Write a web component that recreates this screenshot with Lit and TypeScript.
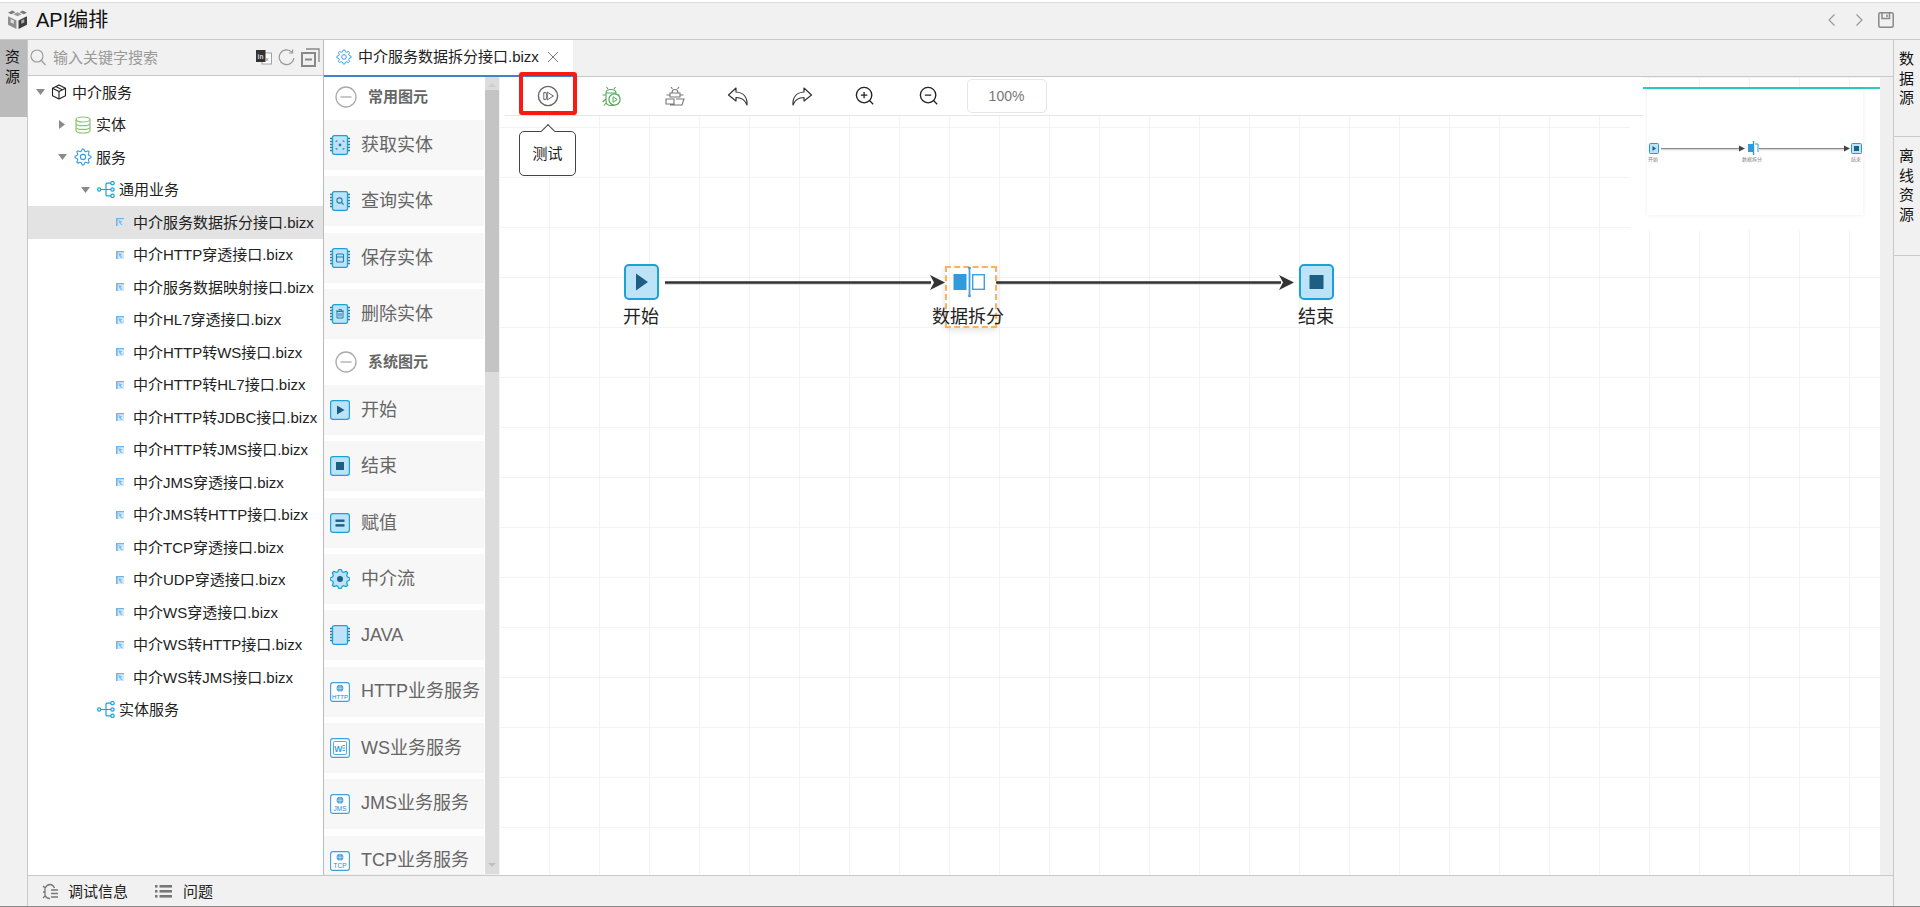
import { LitElement, html, svg, css } from "lit";
import { customElement } from "lit/decorators.js";

function gearPath(cx: number, cy: number, ro: number, ri: number, teeth: number): string {
  const pts: string[] = [];
  const n = teeth * 4;
  for (let i = 0; i < n; i++) {
    const a = (i / n) * Math.PI * 2 - Math.PI / 2 - Math.PI / n;
    const r = i % 4 < 2 ? ro : ri;
    pts.push(`${(cx + r * Math.cos(a)).toFixed(2)} ${(cy + r * Math.sin(a)).toFixed(2)}`);
  }
  return "M" + pts.join("L") + "Z";
}

const gearOutline = (size = 18, color = "#2f9bea") => html`<svg width=${size} height=${size} viewBox="0 0 18 18" fill="none" stroke=${color} stroke-width="1.1" stroke-linejoin="round"><path d=${gearPath(9, 9, 8, 6, 8)}></path><circle cx="9" cy="9" r="2.6"></circle></svg>`;

const cubeIcon = html`<svg width="16" height="16" viewBox="0 0 16 16" fill="none" stroke="#222" stroke-width="1.1" stroke-linejoin="round"><path d="M8 1 14.5 4.2V11.8L8 15 1.5 11.8V4.2Z"></path><path d="M1.5 4.2 8 7.4 14.5 4.2M8 7.4V15M4.8 2.6 11.2 5.8"></path></svg>`;
const dbIcon = html`<svg width="16" height="18" viewBox="0 0 16 18" fill="none" stroke="#8cc474" stroke-width="1.2"><ellipse cx="8" cy="3.5" rx="7" ry="2.5"></ellipse><path d="M1 3.5V14.5C1 16 4 17 8 17S15 16 15 14.5V3.5M1 7.2C1 8.7 4 9.7 8 9.7S15 8.7 15 7.2M1 10.9C1 12.4 4 13.4 8 13.4S15 12.4 15 10.9"></path></svg>`;
const flowIcon = html`<svg width="18" height="17" viewBox="0 0 18 17" fill="none" stroke="#1ba1d8" stroke-width="1.2"><circle cx="2.2" cy="8.5" r="1.6"></circle><circle cx="15.5" cy="2.2" r="1.7"></circle><circle cx="15.5" cy="8.5" r="1.7"></circle><circle cx="15.5" cy="14.8" r="1.7"></circle><path d="M3.8 8.5H13.8M9 8.5V3.2Q9 2.2 10 2.2H13.8M9 8.5V13.8Q9 14.8 10 14.8H13.8"></path></svg>`;
const fileIcon = html`<svg width="8" height="8" viewBox="0 0 8 8"><rect width="8" height="8" fill="#d3e8f7"></rect><path d="M0 0H1.6V8H0ZM0 0H8V1.2H0Z" fill="#6fb4e4"></path><path d="M2.4 2 6.5 3.4 4.6 4.4 6.6 7H5L3 4.6Z" fill="#7dbbe8"></path></svg>`;

const chip = (inner: unknown) => html`<svg width="20" height="20" viewBox="0 0 20 20">
  <path d="M0 3.5H3M0 6.5H3M0 9.5H3M0 12.5H3M0 15.5H3M17 3.5H20M17 6.5H20M17 9.5H20M17 12.5H20M17 15.5H20" stroke="#2b7da3" stroke-width="1.3"></path>
  <rect x="2.5" y="0.7" width="15" height="18.6" rx="1.6" fill="#bde3f9" stroke="#1ba1d8" stroke-width="1.3"></rect>${inner}</svg>`;
const boxIcon = (inner: unknown) => html`<svg width="20" height="20" viewBox="0 0 20 20"><rect x="0.6" y="0.6" width="18.8" height="18.8" rx="2.4" fill="#bde3f9" stroke="#1ba1d8" stroke-width="1.2"></rect>${inner}</svg>`;
const svcIcon = (label: string, fs: number) => html`<svg width="20" height="20" viewBox="0 0 20 20"><rect x="0.6" y="0.6" width="18.8" height="18.8" rx="2.4" fill="#fff" stroke="#3d9fe0" stroke-width="1.1"></rect><circle cx="10" cy="6.2" r="3.4" fill="#4aa3df"></circle><path d="M6.6 6.2H13.4M10 2.8V9.6" stroke="#fff" stroke-width="0.5"></path><text x="10" y="16.8" text-anchor="middle" font-family="Liberation Sans" font-size=${fs} fill="#2f86c9">${label}</text></svg>`;

const paletteIcons: Record<string, unknown> = {
  get: chip(svg`<g fill="none" stroke="#2b7da3" stroke-width="1"><path d="M6 7V6H7.5M12.5 6H14V7M6 13V14H7.5M12.5 14H14V13"></path></g><circle cx="10" cy="10" r="1.4" fill="#2b7da3"></circle>`),
  query: chip(svg`<circle cx="9.5" cy="9.5" r="2.6" fill="none" stroke="#2b7da3" stroke-width="1.1"></circle><path d="M11.5 11.5 13.6 13.6" stroke="#2b7da3" stroke-width="1.2"></path>`),
  save: chip(svg`<rect x="6.5" y="6" width="7" height="8" rx="1" fill="none" stroke="#2b7da3" stroke-width="1.1"></rect><path d="M6.5 9H13.5" stroke="#2b7da3" stroke-width="1"></path>`),
  del: chip(svg`<path d="M7 7.5H13V14H7ZM6 7H14M8.6 5.5H11.4V7M9 9V12.5M11 9V12.5" fill="none" stroke="#2b7da3" stroke-width="1"></path>`),
  start: boxIcon(svg`<path d="M7 5.5 14.5 10 7 14.5Z" fill="#1c5f82"></path>`),
  end: boxIcon(svg`<rect x="6" y="6" width="8" height="8" fill="#1c5f82"></rect>`),
  assign: boxIcon(svg`<rect x="5.5" y="6.5" width="9" height="2.4" fill="#1c5f82"></rect><rect x="5.5" y="11.2" width="9" height="2.4" fill="#1c5f82"></rect>`),
  flow: html`<svg width="20" height="20" viewBox="0 0 20 20"><path d=${gearPath(10, 10, 9.8, 7.6, 8)} fill="#bde3f9" stroke="#1ba1d8" stroke-width="1.3" stroke-linejoin="round"></path><circle cx="10" cy="10" r="3" fill="#1c5f82"></circle></svg>`,
  java: chip(""),
  http: svcIcon("HTTP", 6.2),
  ws: html`<svg width="20" height="20" viewBox="0 0 20 20"><rect x="0.6" y="0.6" width="18.8" height="18.8" rx="2.4" fill="#fff" stroke="#3d9fe0" stroke-width="1.1"></rect><rect x="3.5" y="3.5" width="13" height="13" rx="1" fill="none" stroke="#3d9fe0" stroke-width="0.9"></rect><text x="8.3" y="13.5" text-anchor="middle" font-family="Liberation Sans" font-size="8.5" font-weight="700" fill="#3d9fe0">W</text><path d="M12.5 7.5H15M12.5 10H15M12.5 12.5H15" stroke="#3d9fe0" stroke-width="1"></path></svg>`,
  jms: svcIcon("JMS", 6.5),
  tcp: svcIcon("TCP", 6.5),
};

const tbSvg = (w: number, c: unknown) => html`<svg width=${w} height=${w} viewBox="0 0 22 22" fill="none">${c}</svg>`;
const bugBody = (color: string) => svg`<g stroke=${color} stroke-width="1.1"><path d="M6 8Q6 4.5 11 4.5T16 8V16Q16 20.5 11 20.5T6 16Z"></path><path d="M6 8H16M8 4 6.5 2M14 4 15.5 2M6 10H2.5M16 10H19.5M6 14 2.5 17M6 18 4 20.5"></path></g>`;

@customElement("app-root")
export class AppRoot extends LitElement {
  static styles = css`
    :host { display: block; width: 1920px; height: 907px; overflow: hidden; font-family: "Liberation Sans", "Noto Sans CJK SC", sans-serif; font-size: 15px; color: #222; background: #f1f1f1; }
    * { box-sizing: border-box; }
    svg { display: block; flex: none; }
    .page { display: flex; flex-direction: column; height: 907px; border-bottom: 1px solid #888; }
    .top { height: 40px; flex: none; display: flex; align-items: center; padding: 0 26px 0 7px; border-bottom: 1px solid #c9c9c9; background: linear-gradient(#fff 0 2px, #ddd 2px 3px, #f1f1f1 3px); }
    .title { font-size: 20px; margin: 0 0 2px 8px; color: #111; flex: 1; }
    .topnav { display: flex; align-items: center; gap: 11px; }
    .body { flex: 1; display: flex; min-height: 0; }
    .rail { width: 28px; flex: none; border-right: 1px solid #c9c9c9; background: #f1f1f1; }
    .rail-tab { width: 27px; height: 77px; background: #bbb; padding: 7px 5px; line-height: 20px; color: #111; }
    .work { flex: 1; display: flex; flex-direction: column; min-width: 0; }
    .main { flex: 1; display: flex; min-height: 0; }
    .res { width: 296px; flex: none; background: #fff; border-right: 1px solid #bbb; display: flex; flex-direction: column; }
    .search { height: 36px; flex: none; background: #f1f1f1; border-bottom: 1px solid #c9c9c9; display: flex; align-items: center; padding: 0 3px 0 2px; }
    .ph { color: #999; flex: 1; margin: 0 0 2px 7px; }
    .search-tools { display: flex; align-items: center; gap: 6px; }
    .tree { flex: 1; }
    .row { height: 32.5px; display: flex; align-items: center; color: #222; white-space: nowrap; }
    .row.sel { background: #e3e3e3; }
    .rtext { margin-bottom: 2px; }
    .arrow { width: 12px; flex: none; display: flex; justify-content: center; }
    .ticon { width: 18px; margin: 0 4px 0 6px; flex: none; display: flex; justify-content: center; }
    .row.root .ticon { margin-left: 4px; }
    .center { flex: 1; display: flex; flex-direction: column; min-width: 0; }
    .tabs { height: 37px; flex: none; display: flex; background: #f1f1f1; border-bottom: 1px solid #c9c9c9; }
    .tab { width: 249px; height: 37px; background: #fff; border-bottom: 2px solid #3f83c8; display: flex; align-items: center; padding: 0 0 2px 12px; color: #222; }
    .tab-text { margin: 0 8px 2px 6px; }
    .content { flex: 1; display: flex; min-height: 0; }
    .palette { width: 161px; flex: none; background: #fff; height: 797px; overflow: hidden; }
    .group { display: flex; flex-direction: column; gap: 6.33px; }
    .ghead { height: 43px; margin-bottom: -6.33px; padding: 0 0 4px 11px; display: flex; align-items: center; font-weight: 700; color: #666; gap: 11px; }
    .ghead.sys { height: 46px; padding-bottom: 0; }
    .gtext { margin-bottom: 3px; }
    .item { height: 50px; flex: none; width: 160px; background: #f7f7f7; display: flex; align-items: center; padding-left: 6px; gap: 11px; font-size: 18px; color: #666; white-space: nowrap; overflow: hidden; }
    .itext { margin-bottom: 4px; }
    .itext.mix { margin-bottom: 6px; }
    .scroll { width: 14px; flex: none; height: 797px; background: #dcdcdc; position: relative; display: flex; flex-direction: column; align-items: center; }
    .thumb { margin-top: 13px; width: 100%; height: 282px; background: #c4c4c4; }
    .sb-up { position: absolute; top: 6px; left: 3px; width: 0; height: 0; border: 4px solid transparent; border-top: 0; border-bottom: 4px solid #ccc; }
    .sb-down { position: absolute; bottom: 7px; left: 3px; width: 0; height: 0; border: 4px solid transparent; border-bottom: 0; border-top: 4px solid #c0c0c0; }
    .gutter { width: 1px; flex: none; background: #f3f3f3; }
    .canvas { width: 1380px; flex: none; position: relative; background-color: #fff; background-image: linear-gradient(#f3f3f5 1px, transparent 1px), linear-gradient(90deg, #f3f3f5 1px, transparent 1px); background-size: 50px 50px; background-position: 0 0, -1px 0; }
    .strip { width: 13px; flex: none; background: #efefef; }
    .toolbar { height: 39px; margin: 0 237px 0 5px; padding-left: 11px; background: #fff; border-bottom: 1px solid #e6e6ea; display: flex; align-items: center; position: relative; }
    .tool { width: 63.5px; flex: none; display: flex; justify-content: center; }
    .toolbar-lead { position: absolute; left: -5px; top: 0; width: 5px; height: 38px; background: #fff; }
    .zoom { width: 80px; height: 34px; margin-left: 6px; border: 1px solid #e4e6ea; border-radius: 5px; display: flex; align-items: center; justify-content: center; color: #777; font-size: 14px; }
    .red { position: absolute; left: 14px; top: -5px; width: 58px; height: 43px; border: 4px solid #fb1a12; border-radius: 3px; }
    .tip { position: absolute; left: 14px; top: 54px; width: 57px; height: 45px; border: 1px solid #444; border-radius: 5px; background: #fff; display: flex; align-items: center; justify-content: center; font-size: 15px; color: #222; }
    .tip-arrow { position: absolute; left: 23px; top: -6px; width: 10px; height: 10px; background: #fff; border-top: 1px solid #444; border-right: 1px solid #444; transform: rotate(-45deg); }
    .tip-text { position: relative; margin-bottom: 2px; }
    .edges { position: absolute; left: 0; top: 0; }
    .node { position: absolute; width: 80px; display: flex; flex-direction: column; align-items: center; }
    .nbox { width: 35px; height: 36px; }
    .nlabel { font-size: 18px; line-height: 22px; margin-top: 6px; color: #222; white-space: nowrap; }
    .nlabel.s { margin-top: 9px; }
    .split { position: absolute; width: 52px; height: 62px; border: 2px dashed #fdb15e; box-shadow: 0 2px 6px rgba(0,0,0,.12); }
    .mini { position: absolute; left: 1130px; top: 10px; width: 250px; height: 143px; background: #fff; }
    .mini-line { position: absolute; left: 13px; right: 0; top: 0; height: 2px; background: #2cc9c4; }
    .mini-box { position: absolute; left: 17px; top: 3px; width: 216px; height: 125px; background: #fff; box-shadow: 0 0 4px rgba(0,0,0,.08); }
    .right { width: 27px; flex: none; border-left: 1px solid #c9c9c9; background: #f1f1f1; }
    .rtab { padding: 9px 5px 0 5px; line-height: 19.7px; border-bottom: 1px solid #c9c9c9; color: #111; }
    .foot { height: 31px; flex: none; border-top: 1px solid #c9c9c9; display: flex; align-items: center; padding-left: 14px; color: #222; background: #f1f1f1; }
    .foot-text { margin: 0 27px 2px 9px; }
    .foot-text.q { margin-left: 11px; }
  `;

  private tree = [
    { l: 6, t: "中介服务", a: "d", i: cubeIcon },
    { l: 28, t: "实体", a: "r", i: dbIcon },
    { l: 28, t: "服务", a: "d", i: gearOutline(18) },
    { l: 51, t: "通用业务", a: "d", i: flowIcon },
    ...[
      "中介服务数据拆分接口.bizx", "中介HTTP穿透接口.bizx", "中介服务数据映射接口.bizx", "中介HL7穿透接口.bizx", "中介HTTP转WS接口.bizx", "中介HTTP转HL7接口.bizx", "中介HTTP转JDBC接口.bizx", "中介HTTP转JMS接口.bizx", "中介JMS穿透接口.bizx", "中介JMS转HTTP接口.bizx", "中介TCP穿透接口.bizx", "中介UDP穿透接口.bizx", "中介WS穿透接口.bizx", "中介WS转HTTP接口.bizx", "中介WS转JMS接口.bizx",
    ].map((t) => ({ l: 65, t, a: "", i: fileIcon })),
    { l: 51, t: "实体服务", a: "", i: flowIcon },
  ];

  private arrow(a: string) {
    if (a === "d") return html`<svg width="9" height="6" viewBox="0 0 9 6"><path d="M0 0H9L4.5 6Z" fill="#8a8a8a"></path></svg>`;
    if (a === "r") return html`<svg width="6" height="9" viewBox="0 0 6 9"><path d="M0 0V9L6 4.5Z" fill="#8a8a8a"></path></svg>`;
    return "";
  }

  private item(k: string, t: string) {
    const cls = k === "java" ? "" : k === "http" || k === "jms" || k === "tcp" ? "itext mix" : "itext";
    return html`<div class="item">${paletteIcons[k]}<span class=${cls}>${t}</span></div>`;
  }

  private ghead(t: string, sys = false) {
    return html`<div class="ghead ${sys ? "sys" : ""}"><svg width="22" height="22" viewBox="0 0 22 22" fill="none" stroke="#aaa" stroke-width="1.3"><circle cx="11" cy="11" r="10"></circle><path d="M5.5 11H16.5"></path></svg><span class="gtext">${t}</span></div>`;
  }

  private edgeSvg() {
    return html`<svg class="edges" width="1380" height="300" viewBox="0 0 1380 300" fill="none">
      <path d="M165 206.5H431M497 206.5H780" stroke="#bbb" stroke-width="3" opacity=".5"></path>
      <path d="M165 205.5H431M496 205.5H781" stroke="#333" stroke-width="2.6"></path>
      <path d="M445 205.5 430 198 434 205.5 430 213Z" fill="#333"></path>
      <path d="M794 205.5 779 198 783 205.5 779 213Z" fill="#333"></path>
    </svg>`;
  }

  private nodeIcon(inner: unknown) {
    return html`<svg class="nbox" viewBox="0 0 35 36"><rect x="1" y="1" width="33" height="34" rx="4" fill="#bde3f9" stroke="#1ba1d8" stroke-width="2"></rect>${inner}</svg>`;
  }

  private miniMap() {
    return html`<svg width="216" height="125" viewBox="0 0 216 125" fill="none">
      <rect x="2.5" y="53.5" width="9" height="10" rx="1" fill="#bde3f9" stroke="#1ba1d8"></rect><path d="M5.5 56 9 58.5 5.5 61Z" fill="#1c5f82"></path>
      <path d="M14 58.5H94M112 58.5H199" stroke="#888" stroke-width="1.2"></path><path d="M14 59.8H94M112 59.8H199" stroke="#ccc" stroke-width="1"></path>
      <path d="M98 58.5 92 55.5V61.5ZM203 58.5 197 55.5V61.5Z" fill="#444"></path>
      <rect x="101" y="54" width="5.5" height="8" fill="#2f9bdc"></rect><path d="M106.5 51V65" stroke="#2f9bdc" stroke-width="1.4"></path><path d="M108 54H111V62" stroke="#2f9bdc" stroke-width="1"></path>
      <rect x="204.5" y="53.5" width="10" height="10" rx="1" fill="#bde3f9" stroke="#1ba1d8"></rect><rect x="207" y="56" width="5" height="5" fill="#1c5f82"></rect>
      <g font-family="Noto Sans CJK SC" font-size="5" fill="#888" text-anchor="middle"><text x="6" y="71">开始</text><text x="105" y="71">数据拆分</text><text x="209" y="71">结束</text></g>
    </svg>`;
  }

  render() {
    return html`<div class="page">
      <div class="top">
        <svg width="21" height="21" viewBox="0 0 20 20"><path d="M10 3 14 5 10 7 6 5Z" fill="#999"></path><path d="M1 3.5 5 1.5 8 3 4 5ZM19 3.5 15 1.5 12 3 16 5Z" fill="#777"></path><path d="M1 7 9 11V19L1 15Z" fill="#8c8c8c"></path><path d="M19 7 11 11V19L19 15Z" fill="#3c3c3c"></path><path d="M3.5 9.5 6.5 11V14L3.5 12.8Z" fill="#e2e2e2"></path><path d="M16.5 9.5 13.5 11V14L16.5 12.8Z" fill="#aaa"></path></svg>
        <span class="title">API编排</span>
        <div class="topnav">
          <svg width="16" height="16" viewBox="0 0 16 16" fill="none" stroke="#999" stroke-width="1.2"><path d="M10.5 2.5 5 8l5.5 5.5"></path></svg>
          <svg width="16" height="16" viewBox="0 0 16 16" fill="none" stroke="#999" stroke-width="1.2"><path d="M5.5 2.5 11 8l-5.5 5.5"></path></svg>
          <svg width="16" height="16" viewBox="0 0 16 16" fill="none" stroke="#888" stroke-width="1.5"><rect x="0.8" y="0.8" width="14.4" height="14.4" rx="1.5"></rect><path d="M4 1V6.5H11.5V1M9 2.5V5"></path></svg>
        </div>
      </div>
      <div class="body">
        <div class="rail"><div class="rail-tab">资<br />源</div></div>
        <div class="work">
          <div class="main">
            <div class="res">
              <div class="search">
                <svg width="16" height="17" viewBox="0 0 16 17" fill="none" stroke="#999" stroke-width="1.1"><circle cx="7" cy="7" r="6"></circle><path d="M11.3 11.5 15.5 16"></path></svg>
                <span class="ph">输入关键字搜索</span>
                <div class="search-tools">
                  <svg width="16" height="15" viewBox="0 0 16 15"><rect x="6" y="3" width="9.5" height="11" fill="#fff" stroke="#999" stroke-width=".9"></rect><rect width="9.5" height="12" fill="#333"></rect><text x="4.5" y="9" text-anchor="middle" font-family="Liberation Sans" font-size="6.5" font-weight="700" fill="#ddd">in</text><text x="11" y="11" text-anchor="middle" font-family="Liberation Sans" font-size="6" fill="#666">x</text></svg>
                  <svg width="17" height="17" viewBox="0 0 17 17" fill="none" stroke="#999" stroke-width="1.2"><path d="M14 3.4A7.3 7.3 0 1 0 15.8 9"></path><path d="M14.6 .5V4H11"></path></svg>
                  <svg width="19" height="19" viewBox="0 0 19 19" fill="none" stroke="#888"><rect x="1" y="5" width="13" height="13" stroke-width="2"></rect><path d="M5 1H18V14" stroke-width="1.3"></path><path d="M4 11.5H11" stroke-width="2"></path></svg>
                </div>
              </div>
              <div class="tree">
                ${this.tree.map((r, i) => html`<div class="row ${i === 4 ? "sel" : ""} ${i === 0 ? "root" : ""}" style="padding-left:${r.l}px">
                  <span class="arrow">${this.arrow(r.a)}</span><span class="ticon">${r.i}</span><span class="rtext">${r.t}</span>
                </div>`)}
              </div>
            </div>
            <div class="center">
              <div class="tabs">
                <div class="tab">${gearOutline(16)}<span class="tab-text">中介服务数据拆分接口.bizx</span>
                  <svg width="12" height="12" viewBox="0 0 12 12" fill="none" stroke="#777" stroke-width="1"><path d="M1 1 11 11M11 1 1 11"></path></svg></div>
              </div>
              <div class="content">
                <div class="palette">
                  <div class="group">
                    ${this.ghead("常用图元")}
                    ${this.item("get", "获取实体")}${this.item("query", "查询实体")}${this.item("save", "保存实体")}${this.item("del", "删除实体")}
                  </div>
                  <div class="group">
                    ${this.ghead("系统图元", true)}
                    ${this.item("start", "开始")}${this.item("end", "结束")}${this.item("assign", "赋值")}${this.item("flow", "中介流")}${this.item("java", "JAVA")}${this.item("http", "HTTP业务服务")}${this.item("ws", "WS业务服务")}${this.item("jms", "JMS业务服务")}${this.item("tcp", "TCP业务服务")}
                  </div>
                </div>
                <div class="scroll"><div class="sb-up"></div><div class="thumb"></div><div class="sb-down"></div></div>
                <div class="gutter"></div>
                <div class="canvas">
                  ${this.edgeSvg()}
                  <div class="node" style="left:101px;top:187px">${this.nodeIcon(svg`<path d="M12 9.5 24 18 12 26.5Z" fill="#1c5f82"></path>`)}<div class="nlabel">开始</div></div>
                  <div class="split" style="left:445px;top:189px"></div>
                  <div class="node" style="left:428px;top:190px"><svg width="33" height="30" viewBox="0 0 33 30" fill="none"><rect x="1.5" y="7" width="13" height="16" fill="#2f9bdc"></rect><path d="M17.5 0V30" stroke="#3da2e0" stroke-width="1.8"></path><circle cx="17.5" cy="1" r="1.4" fill="#3da2e0"></circle><circle cx="17.5" cy="29" r="1.4" fill="#3da2e0"></circle><rect x="20.7" y="7.7" width="11.6" height="14.6" fill="#fff" stroke="#3da2e0" stroke-width="1.4"></rect></svg><div class="nlabel s">数据拆分</div></div>
                  <div class="node" style="left:776px;top:187px">${this.nodeIcon(svg`<rect x="10.5" y="11" width="14" height="14" fill="#1c5f82"></rect>`)}<div class="nlabel">结束</div></div>
                  <div class="mini"><div class="mini-line"></div><div class="mini-box">${this.miniMap()}</div></div>
                  <div class="toolbar">
                    <div class="toolbar-lead"></div>
                    <div class="tool">${tbSvg(22, svg`<circle cx="11" cy="11" r="9.6" stroke="#666" stroke-width="1.4"></circle><path d="M6.8 7.5V14.5H8.8Q11.2 11 8.8 7.5ZM10.2 7 16.4 11 10.2 15Z" stroke="#666" stroke-width="1" stroke-linejoin="round"></path>`)}</div>
                    <div class="tool">${tbSvg(22, svg`${bugBody("#53a95a")}<circle cx="14.5" cy="14.5" r="5.6" fill="#fff" stroke="#53a95a" stroke-width="1.2"></circle><path d="M13 11.8 17.2 14.5 13 17.2Z" stroke="#53a95a"></path>`)}</div>
                    <div class="tool">${tbSvg(22, svg`<g stroke="#777" stroke-width="1.1"><path d="M6 8H16V12H6ZM8 8Q8 4.5 11 4.5T14 8M8.5 4 7 2M13.5 4 15 2M6 10H2.5M16 10H19.5"></path><path d="M2 14H10V19H2ZM12 14H20L18 20H6"></path></g>`)}</div>
                    <div class="tool">${tbSvg(22, svg`<path d="M9 3 1.5 10 9 16V12.5C14 12.5 18 14.5 20 20 20.5 12 16 7.5 9 7Z" stroke="#333" stroke-width="1.2" stroke-linejoin="round"></path>`)}</div>
                    <div class="tool">${tbSvg(22, svg`<path d="M13 3 20.5 10 13 16V12.5C8 12.5 4 14.5 2 20 1.5 12 6 7.5 13 7Z" stroke="#333" stroke-width="1.2" stroke-linejoin="round"></path>`)}</div>
                    <div class="tool">${tbSvg(20, svg`<circle cx="10" cy="10" r="8.5" stroke="#222" stroke-width="1.5"></circle><path d="M16 16 20 20M6.5 10H13.5M10 6.5V13.5" stroke="#222" stroke-width="1.4"></path>`)}</div>
                    <div class="tool">${tbSvg(20, svg`<circle cx="10" cy="10" r="8.5" stroke="#222" stroke-width="1.5"></circle><path d="M16 16 20 20M6.5 10H13.5" stroke="#222" stroke-width="1.4"></path>`)}</div>
                    <div class="zoom">100%</div>
                    <div class="red"></div>
                    <div class="tip"><div class="tip-arrow"></div><span class="tip-text">测试</span></div>
                  </div>
                </div>
                <div class="strip"></div>
              </div>
            </div>
          </div>
          <div class="foot">
            <svg width="17" height="17" viewBox="0 0 17 17" fill="none" stroke="#777" stroke-width="1.3"><path d="M3 5Q5 1.5 8 1.5T12.5 5M3 5 1 3M3 5V12Q4 15.5 8 15.5M3 9H1M3 13 1 15"></path><path d="M9 7H16M9 10.5H16M9 14H16" stroke-width="1.6"></path></svg>
            <span class="foot-text">调试信息</span>
            <svg width="17" height="13" viewBox="0 0 17 13" fill="#777"><rect width="2.5" height="2.6"></rect><rect x="4.5" width="12.5" height="2.6"></rect><rect y="5" width="2.5" height="2.6"></rect><rect x="4.5" y="5" width="12.5" height="2.6"></rect><rect y="10" width="2.5" height="2.6"></rect><rect x="4.5" y="10" width="12.5" height="2.6"></rect></svg>
            <span class="foot-text q">问题</span>
          </div>
        </div>
        <div class="right">
          <div class="rtab" style="height:97px">数<br />据<br />源</div>
          <div class="rtab" style="height:119px">离<br />线<br />资<br />源</div>
        </div>
      </div>
    </div>`;
  }
}
